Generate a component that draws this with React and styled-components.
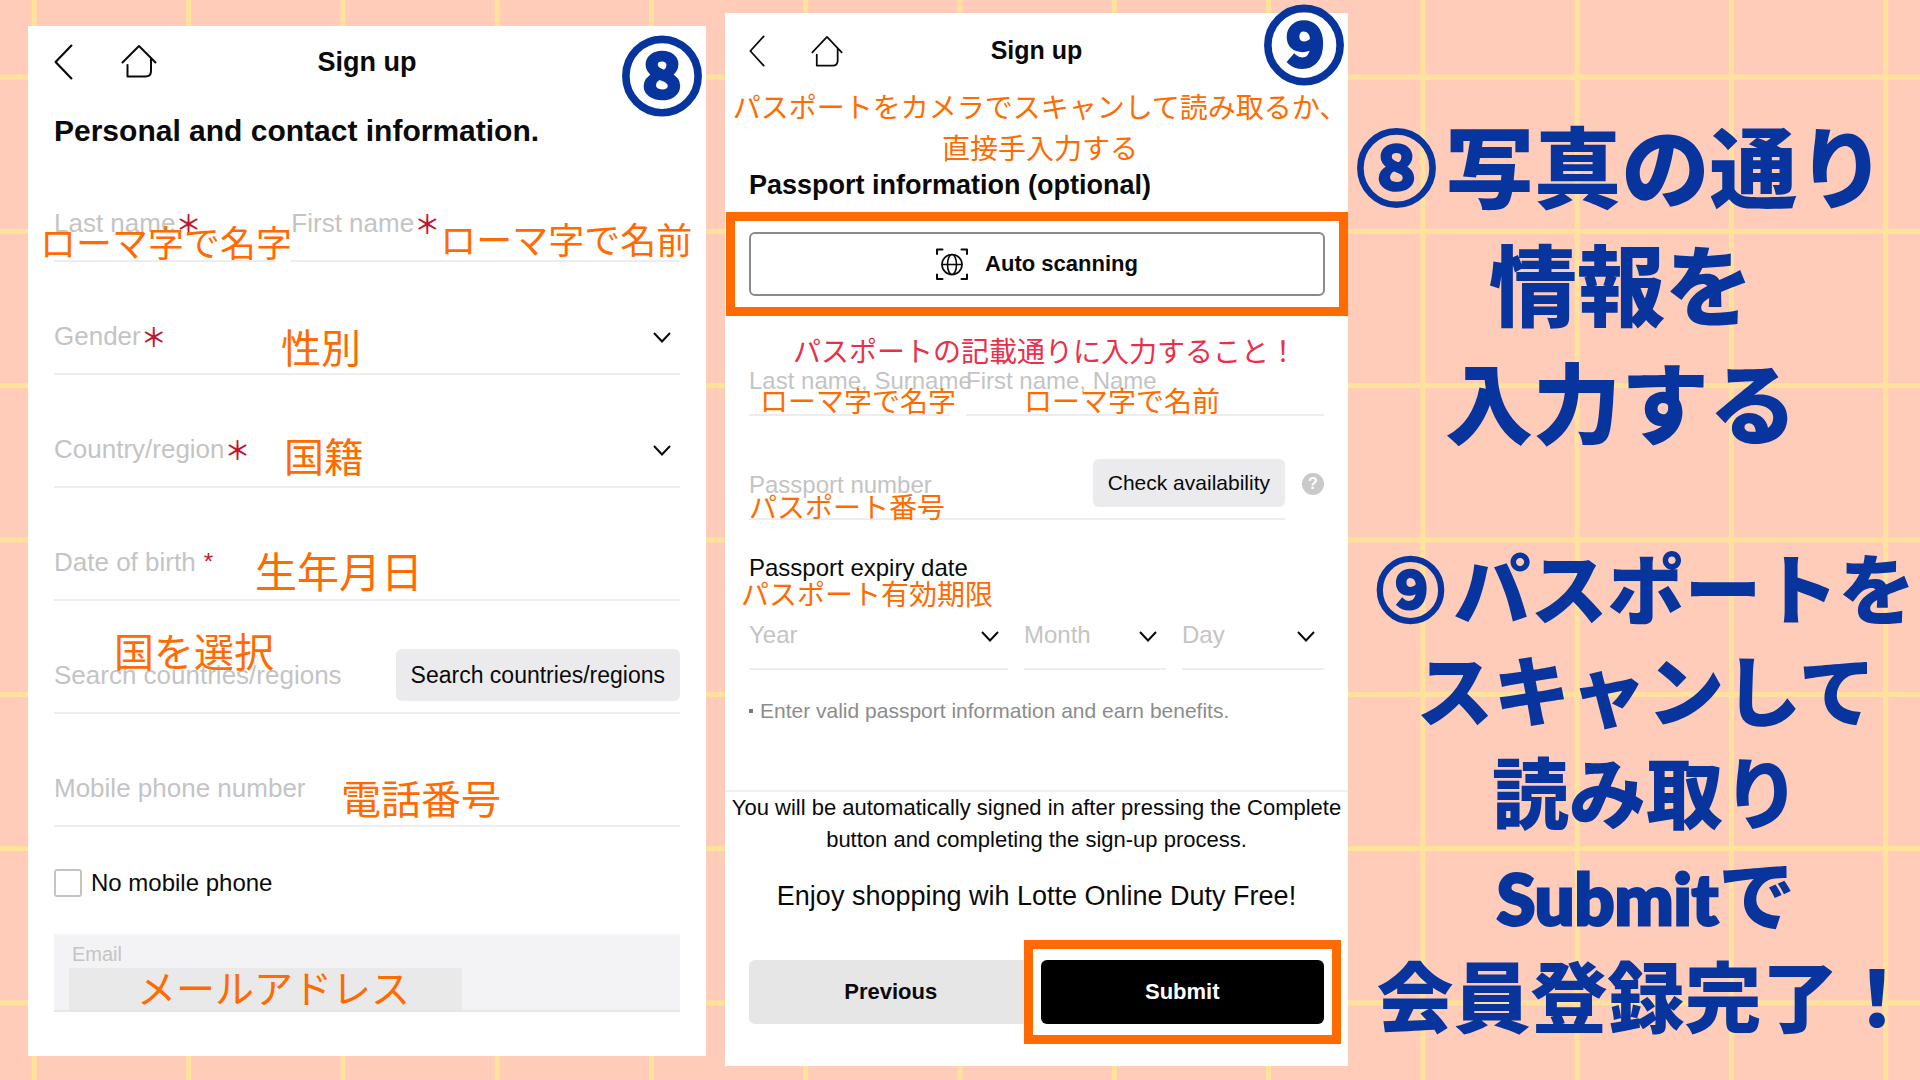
import styled, { createGlobalStyle } from "styled-components";

const NAVY = "#08359d";
const ORANGE = "#ff6b00";
const JP = '"Noto Sans CJK JP", sans-serif';

export default function App() {
  return (
    <>
      <GlobalStyle />
      <Page>
        <PersonalPanel />
        <PassportPanel />
        <Steps>
          <StepLarge>
            <Numeral $size={80}>⑧</Numeral>写真の通り
            <br />
            情報を
            <br />
            入力する
          </StepLarge>
          <StepSmall>
            <Numeral $size={68}>⑨</Numeral>パスポートを
            <br />
            スキャンして
            <br />
            読み取り
            <br />
            <Latin>Submit</Latin>で
            <br />
            会員登録完了！
          </StepSmall>
        </Steps>
      </Page>
    </>
  );
}

function PersonalPanel() {
  return (
    <Panel $top={26} $side={26} $bottom={44} $right={19}>
      <Header $height={72}>
        <Nav $gap={48}>
          <IconButton aria-label="Back">
            <BackIcon width="19" height="36" />
          </IconButton>
          <IconButton aria-label="Home">
            <HomeIcon width="36" height="34" />
          </IconButton>
        </Nav>
        <Title $size={27}>Sign up</Title>
      </Header>
      <Badge $right={4} $top={5}>
        ⑧
      </Badge>
      <Heading $size={30} $line={34} $top={16}>
        Personal and contact information.
      </Heading>
      <NameRow>
        <TextField id="last" label="Last name" star="＊">
          <Note $left={-14} $top={74} $size={36}>
            ローマ字で名字
          </Note>
        </TextField>
        <TextField id="first" label="First name" star="＊">
          <Note $left={149} $top={71} $size={36}>
            ローマ字で名前
          </Note>
        </TextField>
      </NameRow>
      <SelectField id="gender" label="Gender" star="＊">
        <Note $left={227} $top={64}>
          性別
        </Note>
      </SelectField>
      <SelectField id="country" label="Country/region" star="＊">
        <Note $left={230} $top={60}>
          国籍
        </Note>
      </SelectField>
      <TextField id="birth" label="Date of birth" smallStar>
        <Note $left={201} $top={61} $size={42}>
          生年月日
        </Note>
      </TextField>
      <TextField
        id="search"
        label="Search countries/regions"
        action={
          <GrayButton $height={52} $size={23}>
            Search countries/regions
          </GrayButton>
        }
      >
        <Note $left={60} $top={29}>
          国を選択
        </Note>
      </TextField>
      <TextField id="mobile" label="Mobile phone number">
        <Note $left={287} $top={63}>
          電話番号
        </Note>
      </TextField>
      <CheckRow>
        <Checkbox id="nomobile" type="checkbox" />
        <label htmlFor="nomobile">No mobile phone</label>
      </CheckRow>
      <EmailBox>
        <EmailLabel htmlFor="email">Email</EmailLabel>
        <EmailInput id="email" type="email" />
        <Note $left={83} $top={33} $size={39}>
          メールアドレス
        </Note>
      </EmailBox>
    </Panel>
  );
}

function PassportPanel() {
  return (
    <Panel $top={13} $side={24} $bottom={42} $right={0}>
      <Header $height={75}>
        <Nav $gap={46}>
          <IconButton aria-label="Back">
            <BackIcon width="16" height="32" />
          </IconButton>
          <IconButton aria-label="Home">
            <HomeIcon width="32" height="32" />
          </IconButton>
        </Nav>
        <Title $size={25}>Sign up</Title>
      </Header>
      <Badge $right={4} $top={-13}>
        ⑨
      </Badge>
      <Caption>
        パスポートをカメラでスキャンして読み取るか、
        <br />
        直接手入力する
      </Caption>
      <Heading $size={27} $line={30} $top={2}>
        Passport information (optional)
      </Heading>
      <ScanFrame>
        <ScanButton>
          <ScanIcon />
          Auto scanning
        </ScanButton>
      </ScanFrame>
      <PassportNameRow>
        <Note $left={44} $top={20} $size={28} $color="#ea3049">
          パスポートの記載通りに入力すること！
        </Note>
        <TextField id="surname" label="Last name, Surname" small height={100}>
          <Note $left={11} $top={70} $size={28}>
            ローマ字で名字
          </Note>
        </TextField>
        <TextField id="name" label="First name, Name" small height={100}>
          <Note $left={58} $top={70} $size={28}>
            ローマ字で名前
          </Note>
        </TextField>
      </PassportNameRow>
      <NumberRow>
        <TextField
          id="passport"
          label="Passport number"
          small
          height={104}
          action={
            <GrayButton $height={48} $size={21}>
              Check availability
            </GrayButton>
          }
        >
          <Note $left={0} $top={76} $size={28}>
            パスポート番号
          </Note>
        </TextField>
        <Help aria-label="Help">?</Help>
      </NumberRow>
      <ExpiryTitle>
        Passport expiry date
        <Note $left={-8} $top={25} $size={28}>
          パスポート有効期限
        </Note>
      </ExpiryTitle>
      <DateRow>
        <SelectField id="year" label="Year" small height={88} />
        <SelectField id="month" label="Month" small height={88} />
        <SelectField id="day" label="Day" small height={88} />
      </DateRow>
      <Hint>Enter valid passport information and earn benefits.</Hint>
      <Notice>
        You will be automatically signed in after pressing the Complete
        <br />
        button and completing the sign-up process.
      </Notice>
      <Enjoy>Enjoy shopping wih Lotte Online Duty Free!</Enjoy>
      <Actions>
        <PreviousButton>Previous</PreviousButton>
        <SubmitFrame>
          <SubmitButton>Submit</SubmitButton>
        </SubmitFrame>
      </Actions>
    </Panel>
  );
}

function TextField({ id, label, star, smallStar, small, height, action, children }) {
  return (
    <Field $height={height}>
      <Label htmlFor={id} $small={small}>
        {label}
        {star && <Star>{star}</Star>}
        {smallStar && <SmallStar>*</SmallStar>}
      </Label>
      <Input id={id} type="text" />
      {action}
      {children}
    </Field>
  );
}

function SelectField({ id, label, star, small, height, children }) {
  return (
    <Field $height={height}>
      <Label htmlFor={id} $small={small}>
        {label}
        {star && <Star>{star}</Star>}
      </Label>
      <Select id={id} defaultValue="">
        <option value=""></option>
      </Select>
      <Chevron viewBox="0 0 18 11" $small={small}>
        <path d="M1 1l8 8.500 8-8.500" />
      </Chevron>
      {children}
    </Field>
  );
}

function BackIcon(props) {
  return (
    <Line viewBox="0 0 18 36" preserveAspectRatio="none" {...props}>
      <path d="M16.500 1.500L1.500 18l15 16.500" />
    </Line>
  );
}

function HomeIcon(props) {
  return (
    <Line viewBox="0 0 36 34" preserveAspectRatio="none" {...props}>
      <path d="M1.500 18.500L18 2l16.500 16.500" />
      <path d="M6.500 21v11.500h18c3.500 0 5.500-2 5.500-5.500V14.500" />
    </Line>
  );
}

function ScanIcon() {
  return (
    <Line viewBox="0 0 32 32" width="32" height="32">
      <path d="M1 6V1.500h5.500M25.500 1.500H31V6M31 26.500V31h-5.500M6.500 31H1v-4.500" />
      <g strokeWidth="1.600">
        <circle cx="16" cy="16.500" r="10" />
        <ellipse cx="16" cy="16.500" rx="4.500" ry="10" />
        <path d="M6 16.500h20" />
      </g>
    </Line>
  );
}

const GlobalStyle = createGlobalStyle`
  * {
    box-sizing: border-box;
  }
  body {
    margin: 0;
    background: #ffccba;
    color: #0a0a0a;
    font-family: "Liberation Sans", "Noto Sans CJK JP", sans-serif;
  }
  button, input, select {
    font: inherit;
    color: inherit;
  }
`;

/* seven squares to the window height, with a line through the centre */
const Page = styled.main`
  min-height: 100vh;
  display: grid;
  grid-template-columns: 697fr 623fr 572fr;
  align-items: start;
  padding-left: 28px;
  background-color: #ffccba;
  background-image: linear-gradient(
      to right,
      transparent calc(50% - 2px),
      #ffe39c 0 calc(50% + 2px),
      transparent 0
    ),
    linear-gradient(
      transparent calc(50% - 2px),
      #ffe39c 0 calc(50% + 2px),
      transparent 0
    );
  background-size: calc(100vh / 7) calc(100vh / 7);
  background-position: center;
`;

const Panel = styled.section`
  position: relative;
  min-width: 0;
  margin: ${(p) => p.$top}px ${(p) => p.$right}px 0 0;
  padding: 0 ${(p) => p.$side}px ${(p) => p.$bottom}px;
  background: #fff;
`;

const Header = styled.header`
  display: grid;
  grid-template-columns: 1fr auto 1fr;
  align-items: center;
  height: ${(p) => p.$height}px;
`;
const Nav = styled.nav`
  display: flex;
  gap: ${(p) => p.$gap}px;
`;
const IconButton = styled.button`
  display: flex;
  padding: 0;
  border: 0;
  background: none;
  cursor: pointer;
`;
const Line = styled.svg`
  fill: none;
  stroke: #0a0a0a;
  stroke-width: 2;
  stroke-linecap: round;
  stroke-linejoin: round;
`;
const Title = styled.h1`
  margin: 0;
  font-size: ${(p) => p.$size}px;
`;
const Badge = styled.span`
  position: absolute;
  top: ${(p) => p.$top}px;
  right: ${(p) => p.$right}px;
  color: ${NAVY};
  font: 500 80px/1 ${JP};
  -webkit-text-stroke: 5px ${NAVY};
`;
const Heading = styled.h2`
  margin: ${(p) => p.$top}px 0 0;
  font-size: ${(p) => p.$size}px;
  line-height: ${(p) => p.$line}px;
`;

/* hand-placed Japanese remarks */
const Note = styled.span`
  position: absolute;
  z-index: 1;
  left: ${(p) => p.$left}px;
  top: ${(p) => p.$top}px;
  color: ${(p) => p.$color || ORANGE};
  font: 400 ${(p) => p.$size || 40}px/1 ${JP};
  white-space: nowrap;
  pointer-events: none;
`;
const Caption = styled.p`
  margin: -2px -24px 0;
  padding-left: 7px;
  color: ${ORANGE};
  font: 400 28px/41px ${JP};
  text-align: center;
  white-space: nowrap;
`;

const Field = styled.div`
  position: relative;
  display: flex;
  align-items: flex-end;
  min-width: 0;
  height: ${(p) => p.$height || 113}px;
  border-bottom: 2px solid #ededef;
`;
const Label = styled.label`
  display: flex;
  flex-shrink: 0;
  padding-bottom: ${(p) => (p.$small ? 18 : 22)}px;
  color: #c4c4c4;
  font-size: ${(p) => (p.$small ? 24 : 26)}px;
  line-height: 30px;
  white-space: nowrap;
`;
const Star = styled.span`
  color: #c0182f;
  font: 500 26px/30px ${JP};
`;
const SmallStar = styled.span`
  margin-left: 8px;
  color: #c0182f;
  font-size: 24px;
`;
const Input = styled.input`
  flex: 1;
  width: 0;
  min-width: 0;
  height: 60px;
  padding: 0;
  border: 0;
  outline: 0;
  background: none;
`;
const Select = styled.select`
  flex: 1;
  width: 0;
  min-width: 0;
  height: 60px;
  border: 0;
  outline: 0;
  background: none;
  appearance: none;
`;
const Chevron = styled.svg`
  width: 18px;
  height: 11px;
  margin: 0 9px ${(p) => (p.$small ? 26 : 30)}px 0;
  fill: none;
  stroke: #0a0a0a;
  stroke-width: 2;
`;
const GrayButton = styled.button`
  height: ${(p) => p.$height}px;
  margin-bottom: 11px;
  padding: 0 15px;
  border: 0;
  border-radius: 6px;
  background: #ebebed;
  font-size: ${(p) => p.$size}px;
  white-space: nowrap;
`;

const NameRow = styled.div`
  display: grid;
  grid-template-columns: 221fr 388fr;
  gap: 16px;
  margin-top: 1px;
`;
const CheckRow = styled.div`
  display: flex;
  align-items: center;
  gap: 9px;
  margin-top: 42px;
  font-size: 24px;
  line-height: 28px;
`;
const Checkbox = styled.input`
  width: 28px;
  height: 28px;
  margin: 0;
  border: 2px solid #c4c4c4;
  border-radius: 3px;
  background: #fff;
  appearance: none;
`;
const EmailBox = styled.div`
  position: relative;
  height: 78px;
  margin-top: 37px;
  padding: 8px 15px 0;
  border-bottom: 2px solid #e6e6ea;
  background: #f3f3f5;
`;
const EmailLabel = styled.label`
  display: block;
  padding-left: 3px;
  color: #c4c4c4;
  font-size: 20px;
  line-height: 24px;
`;
const EmailInput = styled.input`
  display: block;
  width: 66%;
  height: 42px;
  margin-top: 2px;
  border: 0;
  background: #e9e9e9;
`;

const ScanFrame = styled.div`
  margin: 12px -24px 0 -23px;
  padding: 11px 14px;
  border: 9px solid ${ORANGE};
`;
const ScanButton = styled.button`
  display: flex;
  align-items: center;
  justify-content: center;
  gap: 17px;
  width: 100%;
  height: 64px;
  border: 2px solid #8a8a8a;
  border-radius: 6px;
  background: #fff;
  font-size: 22px;
  font-weight: 700;
`;
const PassportNameRow = styled.div`
  position: relative;
  display: grid;
  grid-template-columns: 201fr 358fr;
  gap: 16px;
`;
const NumberRow = styled.div`
  display: grid;
  grid-template-columns: 1fr 22px;
  gap: 17px;
  align-items: end;
`;
const Help = styled.button`
  width: 22px;
  height: 22px;
  margin-bottom: 25px;
  padding: 0;
  border: 0;
  border-radius: 50%;
  background: #c9c9c9;
  color: #fff;
  font-size: 16px;
  font-weight: 700;
  line-height: 22px;
`;
const ExpiryTitle = styled.h3`
  position: relative;
  margin: 34px 0 0;
  font-size: 24px;
  font-weight: 400;
  line-height: 28px;
`;
const DateRow = styled.div`
  display: grid;
  grid-template-columns: 259fr 142fr 142fr;
  gap: 16px;
`;
const Hint = styled.p`
  display: flex;
  align-items: center;
  gap: 7px;
  margin: 28px 0 0;
  color: #8c8c8c;
  font-size: 21px;
  line-height: 26px;
  white-space: nowrap;

  &::before {
    content: "";
    width: 4px;
    height: 4px;
    background: #777;
  }
`;
const Notice = styled.p`
  margin: 66px -24px 0;
  border-top: 2px solid #f0f0f0;
  font-size: 22px;
  line-height: 32px;
  text-align: center;
`;
const Enjoy = styled.p`
  margin: 24px 0 0;
  font-size: 27px;
  line-height: 32px;
  text-align: center;
`;
const Actions = styled.div`
  display: grid;
  grid-template-columns: 1fr 1fr;
  gap: 8px;
  margin-top: 48px;
`;
const PreviousButton = styled.button`
  height: 64px;
  border: 0;
  border-radius: 6px;
  background: #e6e6e6;
  font-size: 22px;
  font-weight: 700;
`;
const SubmitFrame = styled.div`
  position: relative;
  margin: -20px -17px;
  padding: 11px 8px;
  border: 9px solid ${ORANGE};
  background: #fff;
`;
const SubmitButton = styled(PreviousButton)`
  width: 100%;
  background: #000;
  color: #fff;
`;

const Steps = styled.aside`
  min-width: 0;
  padding-top: 104px;
  color: ${NAVY};
  font-family: ${JP};
  font-weight: 900;
  text-align: center;
  white-space: nowrap;
`;
const StepLarge = styled.p`
  margin: 0;
  padding-right: 26px;
  font-size: 88px;
  line-height: 118px;
`;
const StepSmall = styled.p`
  margin: 77px 0 0;
  padding-left: 24px;
  font-size: 77px;
  line-height: 102px;
`;
const Numeral = styled.span`
  margin-right: 9px;
  font-size: ${(p) => p.$size}px;
  font-weight: 500;
  line-height: 1;
  vertical-align: 3px;
  -webkit-text-stroke: 4px ${NAVY};
`;
const Latin = styled.span`
  font-family: Lato, sans-serif;
  font-size: 70px;
  line-height: 1;
  -webkit-text-stroke: 3px ${NAVY};
`;
